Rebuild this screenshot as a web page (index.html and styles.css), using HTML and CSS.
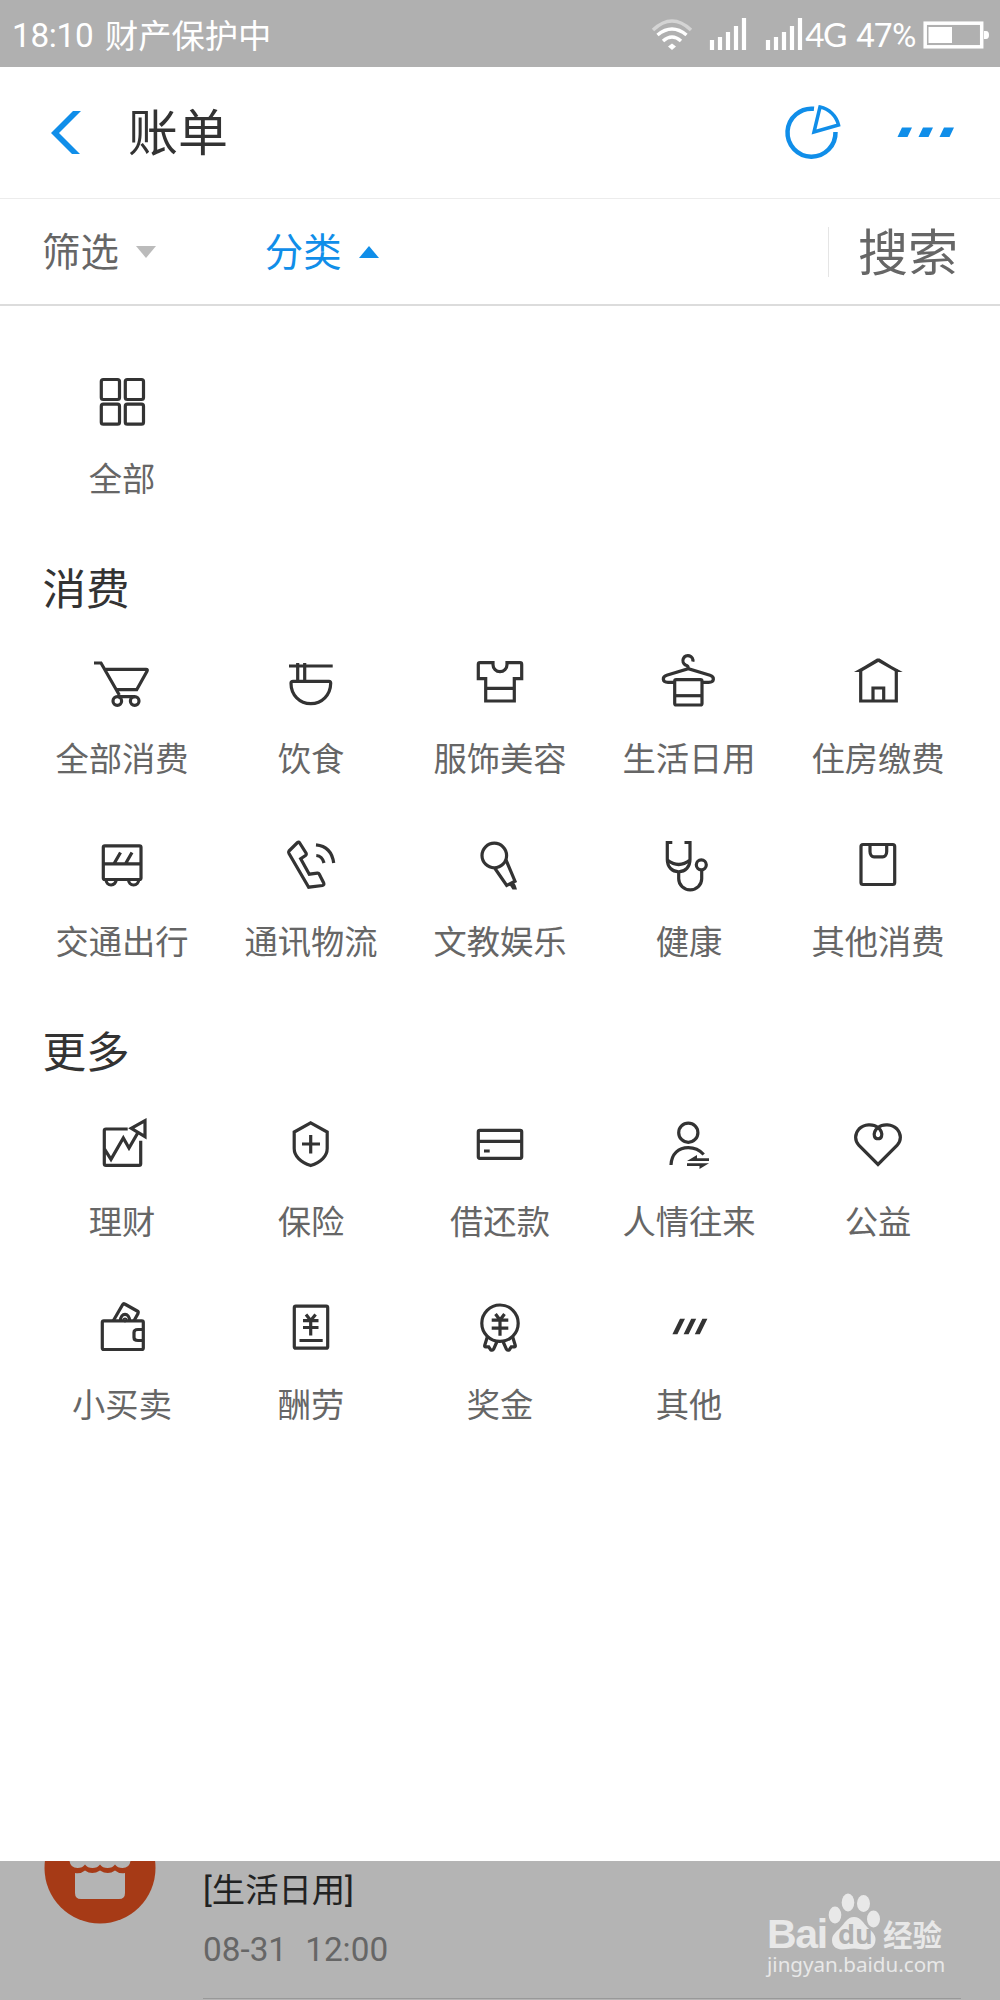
FILE: index.html
```html
<!DOCTYPE html>
<html lang="zh-CN">
<head>
<meta charset="utf-8">
<title>账单</title>
<link rel="stylesheet" href="styles.css">
</head>
<body>
<div class="status">
  <span class="clock">18:10</span><span class="protect">财产保护中</span>
  <svg class="wifi" width="42" height="32" viewBox="0 0 42 32"><path class="faint" d="M2 12Q21 -6 40 12"/><path d="M6.500 17Q21 5 35.500 17M12 23Q21 15 30 23"/><path class="solid" d="M21 25.500l4 3-4 3.500-4-3.500z"/></svg>
  <svg class="signal one" width="38" height="34" viewBox="0 0 38 34"><path d="M3 33v-10M11 33v-13M19 33v-18M27 33v-24M35 33v-32"/></svg>
  <svg class="signal two" width="38" height="34" viewBox="0 0 38 34"><path d="M3 33v-10M11 33v-13M19 33v-18M27 33v-24M35 33v-32"/></svg>
  <span class="network">4G</span><span class="percent">47%</span>
  <svg class="battery" width="65" height="26" viewBox="0 0 65 26"><rect x="1.200" y="1.200" width="56.500" height="23.600"/><path class="solid" d="M4.500 5h23.500v16h-23.500zM60 9h2q3 0 3 4t-3 4h-2z"/></svg>
</div>
<header class="header">
  <svg class="back" width="32" height="44" viewBox="0 0 32 44"><path d="M22 0h8L8 22l21 21h-8L0 22z"/></svg>
  <h1>账单</h1>
  <svg class="pie" width="58" height="58" viewBox="0 0 58 58"><path d="M30 5.800A24 24 0 1 0 51.500 29"/><path d="M36 4L30 29L54.500 22A24 24 0 0 0 36 4z" class="slice"/></svg>
  <svg class="dots" width="58" height="12" viewBox="0 0 58 12"><path d="M5 1.500h10l-4.500 9.500h-10zM26 1.500h10l-4.500 9.500h-10zM47 1.500h10l-4.500 9.500h-10z"/></svg>
</header>
<nav class="filters">
  <span class="filter">筛选</span><svg class="caret" width="20" height="12" viewBox="0 0 20 12"><path d="M0 0h20L10 12z"/></svg>
  <span class="filter active">分类</span><svg class="caret active" width="20" height="12" viewBox="0 0 20 12"><path d="M0 12h20L10 0z"/></svg>
  <span class="search">搜索</span>
</nav>
<main class="panel">
  <div class="grid">
    <div class="item"><svg class="icon" viewBox="0 0 60 60"><rect x="9.300" y="7.500" width="18.200" height="20" rx="2"/><rect x="33.300" y="7.500" width="18.200" height="20" rx="2"/><rect x="9.300" y="32.200" width="18.200" height="20" rx="2"/><rect x="33.300" y="32.200" width="18.200" height="20" rx="2"/></svg><span>全部</span></div>
  </div>
  <h2>消费</h2>
  <div class="grid">
    <div class="item"><svg class="icon" viewBox="0 0 60 60"><path d="M2 11h7L27.300 43M13 17.300h41q2 0 1 2L44.700 37.700H25M26 44.700h17"/><circle cx="25.300" cy="49" r="4.300"/><circle cx="42.700" cy="49" r="4.300"/></svg><span>全部消费</span></div>
    <div class="item"><svg class="icon" viewBox="0 0 60 60"><path d="M8 14h43.700M16.700 11v18M23.700 11v18M12 29.300h36q1.700 0 1.700 2C49.500 43 41 51.700 29.800 51.700S10 43 10 31.300q0-2 2-2z"/></svg><span>饮食</span></div>
    <div class="item"><svg class="icon" viewBox="0 0 60 60"><path d="M10 10.700h13v2a7 7 0 0 0 14 0v-2h13q1.700 0 1.700 1.700v14.300h-7.400V49H15.700V26.700H8.300V12.400q0-1.700 1.700-1.700zM15.700 36.300h28.600"/></svg><span>服饰美容</span></div>
    <div class="item"><svg class="icon" viewBox="0 0 60 60"><path d="M33.800 9.700A5 5 0 1 0 26.500 13q3 .6 2.800 4M15.700 30.300H9c-6 0-6-5.500-1.300-7l21.600-6.600L51 23.300c4.700 1.500 4.700 7-1.300 7h-6.700"/><rect x="15.700" y="27.700" width="27.300" height="25.300" rx="1.500"/><path d="M15.700 43.700h27.300"/></svg><span>生活日用</span></div>
    <div class="item"><svg class="icon" viewBox="0 0 60 60"><path d="M12.700 17.500V49h35.600V17.500M25 49V36h10.700v13"/><path class="solid" d="M6 20Q17 14 29 6.500h2.500Q43 14 54.700 20H48L30.300 10 13 20z"/></svg><span>住房缴费</span></div>
    <div class="item"><svg class="icon" viewBox="0 0 60 60"><rect x="11.300" y="10.800" width="37.700" height="33.700" rx="1.500"/><path d="M11.300 28.800H49M28.500 17.500L22 28.800M40 17.500L33.500 28.800M14 44.500a5.100 5.500 0 0 0 10.200 0M36.500 44.500a5.100 5.500 0 0 0 10.200 0"/></svg><span>交通出行</span></div>
    <div class="item"><svg class="icon" viewBox="0 0 60 60"><path d="M8 16L16.500 7.500q1.300-1 2.200.5L25 18q.7 1.500-.5 2.500l-4.800 3.300L28.300 39.200l8-1q1.400-.2 2 1l4.400 8.800q.8 2-1.200 2.500L27.700 52.200L8 18.500q-.8-1.500 0-2.500zM35.300 20.500q6 .5 7.700 7.500M35 9.800q15.500 1.500 17.700 18.200"/></svg><span>通讯物流</span></div>
    <div class="item"><svg class="icon" viewBox="0 0 60 60"><circle cx="24.300" cy="20.500" r="12.300"/><path d="M25 33.500L36.700 50.500L45 46.200L36 25"/><path class="solid" d="M39 49l4-2.500L45.500 50l1.500 4.500h-4.500z"/></svg><span>文教娱乐</span></div>
    <div class="item"><svg class="icon" viewBox="0 0 60 60"><path d="M13.300 7.500H8.300v17C8.300 32 13 36.800 19.700 36.800S31 32 31 24.500v-17h-5.500M8.300 25q11.400 9 22.700 0M19.700 37v6.800a11.500 11 0 0 0 23 0v-8.300"/><circle cx="42.300" cy="29.800" r="5"/></svg><span>健康</span></div>
    <div class="item"><svg class="icon" viewBox="0 0 60 60"><rect x="13" y="9.500" width="33.700" height="40" rx="2"/><path d="M22 9.500v7c0 3.500 2 5.300 4 5.300h8.700c2 0 4-1.800 4-5.300v-7"/></svg><span>其他消费</span></div>
  </div>
  <h2>更多</h2>
  <div class="grid">
    <div class="item"><svg class="icon" viewBox="0 0 60 60"><path d="M35.700 14H14q-1.700 0-1.700 1.700v33q0 1.600 1.700 1.600h33q1.700 0 1.700-1.600v-23M12.700 34.300L19 44.300 31.300 23 37 33l9-15.500M53 5.700L39.300 13.300 53 21.700z"/></svg><span>理财</span></div>
    <div class="item"><svg class="icon" viewBox="0 0 60 60"><path d="M29.700 7.900L46.200 17v16.500C46.200 41 40 47.500 29.700 50.500C19.500 47.500 13.200 41 13.200 33.500V17zM29.700 20v18.500M21 29h18"/></svg><span>保险</span></div>
    <div class="item"><svg class="icon" viewBox="0 0 60 60"><rect x="8.300" y="15.300" width="43.400" height="28" rx="1.500"/><path d="M8.300 26.300h43.400M14 36h5.700"/></svg><span>借还款</span></div>
    <div class="item"><svg class="icon" viewBox="0 0 60 60"><circle cx="29.300" cy="17.700" r="9.600"/><path d="M12 50C12.500 39 19.500 32.700 29.300 32.700q9 0 15.400 6.800"/><path class="solid" d="M28 46L38 40v3.200h12V46zM28 48.200h22L40.500 54v-3H28z"/></svg><span>人情往来</span></div>
    <div class="item"><svg class="icon" viewBox="0 0 60 60"><path d="M30 12.500C25 8.500 16 9 11 14c-4.500 5-4.500 11.500 0 16.500l19 19L49 30.500c4.500-5 4.500-11.500 0-16.500-5-5-14-5.500-19-1.500-4 3.500-4.500 6-3.500 9 1.300 3 5.700 3 7 0 1-3 .5-5.500-3.500-9z"/></svg><span>公益</span></div>
    <div class="item"><svg class="icon" viewBox="0 0 60 60"><rect x="10.300" y="22.800" width="41" height="28.700" rx="1.500"/><path d="M51.300 31.500H46q-4 0-4 3v5q0 3 4 3h5.300M21.300 22.800L30.700 6.500q.7-1.300 2-.5l12.500 7q1.500.8.800 2.500L42 22.800M28.500 22.800c0-8.500 9-8.500 9 0"/><circle cx="33" cy="22" r=".8"/></svg><span>小买卖</span></div>
    <div class="item"><svg class="icon" viewBox="0 0 60 60"><rect x="13.300" y="8.200" width="33.400" height="42" rx="1.500"/><path d="M25 16.500l4.700 6 4.900-6M22 22.700h15.500M22 29.500h15.500M29.700 22v15.500M18.500 42.500h23.200"/></svg><span>酬劳</span></div>
    <div class="item"><svg class="icon" viewBox="0 0 60 60"><circle cx="30" cy="25.200" r="18.200"/><path d="M25.500 16l4.500 6 4.500-6M21.700 22.200h16.600M21.700 30.200h16.600M30 22v15.800M17.300 39l-2.600 8.500q-.3 1.300 1 1.300h3l2 3q1.500 1 2.800-.5L27 43.500M42.700 39l2.600 8.500q.3 1.300-1 1.300h-3l-2 3q-1.500 1-2.800-.5L33 43.500"/></svg><span>奖金</span></div>
    <div class="item"><svg class="icon" viewBox="0 0 60 60"><path class="solid" d="M13.400 36.200h5L26 20.800h-5zM24.600 36.200h5l7.600-15.400h-5zM35.800 36.200h5l7.600-15.400h-5z"/></svg><span>其他</span></div>
  </div>
</main>
<section class="bill">
  <svg class="shop" width="112" height="64" viewBox="0 0 112 64"><circle cx="56" cy="7" r="55.500"/><path d="M25.500 0q1 7 8 7 5 0 7.500-3.500Q43.500 7 48.500 7t7.500-3.500Q58.500 7 63.500 7t7.500-3.500Q73.500 7 78.500 7q7 0 8-7zM31 12q6 1 10-2.500 7 5 15 0 8 5 15 0 4 3.500 10 2.500v20q0 6-6 6h-38q-6 0-6-6z"/></svg>
  <div class="detail"><div class="kind">[生活日用]</div><div class="date">08-31&nbsp; 12:00</div></div>
  <div class="watermark">
    <div class="brand"><span class="bai">Bai</span><svg width="54" height="58" viewBox="0 0 54 58"><ellipse cx="7" cy="22" rx="6.300" ry="8.500"/><ellipse cx="20" cy="9.500" rx="6.300" ry="9"/><ellipse cx="35.500" cy="10.500" rx="6.500" ry="8.500"/><ellipse cx="45.500" cy="26" rx="6.500" ry="8.500"/><path d="M26 24c7 0 9 6 14 11 5 4 8 8 7.500 12-.5 7-5 9.500-11 9.500-4 0-6-1-10.500-1s-7 1-11 1C9 56.500 4 54 4 47c0-5 4-8 8-12 5-5 7-11 14-11z"/><text x="10" y="51">du</text></svg><span class="jy">经验</span></div>
    <div class="site">jingyan.baidu.com</div>
  </div>
</section>
</body>
</html>
```
FILE: styles.css
```css
* { box-sizing: border-box; }
body { margin: 0; width: 1000px; height: 2000px; overflow: hidden; display: flex; flex-direction: column; background: #fff; color: #333; font-family: Roboto, "Noto Sans CJK SC", sans-serif; }
svg { flex: none; display: block; overflow: visible; }
h1, h2 { margin: 0; font-weight: 400; }
.status { height: 66.5px; flex: none; display: flex; align-items: center; background: #b0b0b0; color: #fff; font-size: 33.3px; line-height: 50px; padding: 5px 11px 0 12px; white-space: nowrap; }
.status svg { fill: none; stroke: #fff; stroke-width: 3.5; }
.status .solid { fill: #fff; stroke: none; }
.status .faint { stroke: #d4d4d4; }
.clock { width: 93px; letter-spacing: -0.3px; }
.protect { width: 547px; font-family: "Noto Sans CJK SC", sans-serif; margin-top: -4px; }
.wifi { margin-top: -3px; }
.status .signal { stroke-width: 4.2; margin-top: -3px; }
.signal.one { margin-left: 16px; }
.signal.two { margin-left: 18px; }
.network { font-family: Lato, sans-serif; margin: -4px 0 0 2px; width: 51px; letter-spacing: -1.5px; }
.percent { width: 68px; letter-spacing: -0.8px; }
.battery { margin-top: -2px; }
.header { height: 132.5px; flex: none; display: flex; align-items: center; padding: 0 45px 0 51px; border-bottom: 1px solid #ececec; }
.back { fill: #108ee9; margin-top: 1px; }
h1 { font-size: 50px; line-height: 60px; margin-left: 45px; padding-top: 4px; flex: 1; }
.pie { fill: none; stroke: #108ee9; stroke-width: 4.5; }
.slice { stroke-width: 3.5; }
.dots { fill: #108ee9; margin-left: 55px; }
.filters { height: 107px; flex: none; display: flex; align-items: center; padding: 0 42px; border-bottom: 2px solid #dcdcdc; color: #666; }
.filter { font-size: 38.4px; line-height: 50px; padding-top: 3px; }
.filter.active { color: #108ee9; margin-left: 109px; }
.caret { fill: #bbb; margin-left: 17px; }
.caret.active { fill: #108ee9; }
.search { margin-left: auto; font-size: 50px; line-height: 46px; padding: 4px 0 0 29px; border-left: 1px solid #e5e5e5; }
.panel { height: 1555px; flex: none; padding: 66px 27.5px 0; }
.grid { display: grid; grid-template-columns: repeat(5, 189px); row-gap: 52.5px; }
.item { display: flex; flex-direction: column; align-items: center; gap: 24px; color: #666; font-size: 33.3px; line-height: 47px; white-space: nowrap; }
.icon { width: 60px; height: 60px; fill: none; stroke: #333; stroke-width: 3.2; }
.icon .solid { fill: #333; stroke: none; }
h2 { font-size: 43.6px; line-height: 60px; margin: 57.5px 0 31px 15px; }
.bill { position: relative; flex: 1; display: flex; background: #b4b4b4; padding: 0 39px 0 44px; }
.shop { fill: #a63a16; overflow: hidden; }
.shop path { fill: #b4b4b4; }
.detail { margin-left: 47px; flex: 1; height: 138px; border-bottom: 1px solid #999; padding-top: 5px; }
.kind { font-size: 33.3px; line-height: 50px; color: #222; }
.date { font-size: 33.3px; line-height: 50px; color: #666; margin-top: 9px; word-spacing: 0.8px; }
.watermark { position: absolute; left: 767px; top: 32px; width: 182px; color: #e8e8e8; }
.brand { display: flex; align-items: flex-end; height: 58px; }
.brand svg { fill: #e8e8e8; }
.brand text { fill: #b0b0b0; font: 700 27px "Open Sans", sans-serif; }
.bai { width: 61px; font: 700 41px/34px "Liberation Sans", sans-serif; letter-spacing: -1.3px; }
.jy { margin-left: 1px; font: 700 29.5px/36px "Noto Sans CJK SC", sans-serif; }
.site { font: 20.6px/27px "Noto Sans", sans-serif; }
```
